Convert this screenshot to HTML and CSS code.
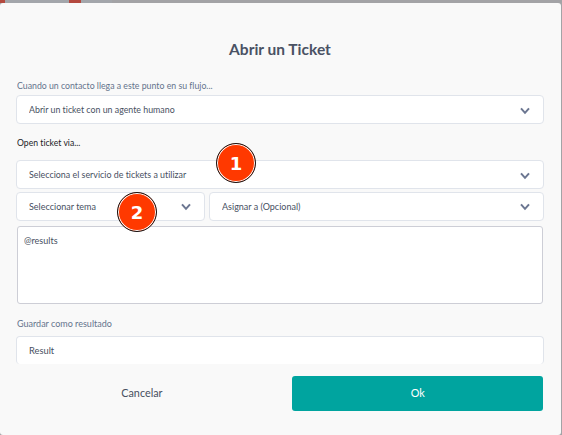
FILE: index.html
```html
<!DOCTYPE html>
<html lang="es">
<head>
<meta charset="utf-8">
<title>Abrir un Ticket</title>
<link rel="stylesheet" href="styles.css">
</head>
<body>
<div class="canvas-strip"></div>
<main class="modal">
  <h1 class="title">Abrir un Ticket</h1>
  <div class="label intro"><span>Cuando un contacto llega a este punto en su flujo...</span></div>
  <div class="select"><span class="t-action">Abrir un ticket con un agente humano</span><svg class="chevron" viewBox="0 0 10 8"><path d="M1 1.4 5 5.8 9 1.4"/></svg></div>
  <div class="label via"><span>Open ticket via...</span></div>
  <div class="select"><span class="t-service">Selecciona el servicio de tickets a utilizar</span><svg class="chevron" viewBox="0 0 10 8"><path d="M1 1.4 5 5.8 9 1.4"/></svg><b class="marker one">1</b></div>
  <div class="row">
    <div class="select topic"><span class="t-topic">Seleccionar tema</span><svg class="chevron" viewBox="0 0 10 8"><path d="M1 1.4 5 5.8 9 1.4"/></svg><b class="marker two">2</b></div>
    <div class="select assignee"><span class="t-assign">Asignar a (Opcional)</span><svg class="chevron" viewBox="0 0 10 8"><path d="M1 1.4 5 5.8 9 1.4"/></svg></div>
  </div>
  <div class="body-text"><span>@results</span></div>
  <div class="label save"><span>Guardar como resultado</span></div>
  <div class="select result"><span class="t-result">Result</span></div>
  <div class="actions">
    <div class="button cancel"><span>Cancelar</span></div>
    <div class="button ok"><span>Ok</span></div>
  </div>
</main>
</body>
</html>
```
FILE: styles.css
```css
* { box-sizing: border-box; }
body {
  margin: 0;
  height: 435px;
  overflow: hidden;
  background: #a3a3a6;
  font-family: Lato, "Liberation Sans", sans-serif;
  font-size: 10px;
  font-variant-ligatures: none;
  color: #47505f;
}
.canvas-strip {
  height: 3px;
  background: linear-gradient(90deg, #b4493f 0 5px, #a3a6ab 5px 69px, #b4493f 69px 81px, #a3a6ab 81px 112px, #a3a3a6 112px);
}
.modal {
  width: 561px;
  height: 432px;
  padding: 36px 17px 0 16px;
  border-radius: 3px;
  background: #f9f9f9;
}
span {
  display: inline-block;
  white-space: nowrap;
  transform: scaleX(0.9);
  transform-origin: left center;
}
.title {
  margin: 0;
  height: 22px;
  line-height: 21px;
  font-size: 15.5px;
  text-align: center;
  color: #4a5264;
}
.label { padding-left: 1px; line-height: 13px; color: #64738c; }
.intro { margin-top: 18px; height: 16px; }
.intro span { transform: scaleX(0.875); }
.via { margin: 12px 0 0; height: 24px; color: #1b1b1f; }
.via span { transform: scaleX(0.865); }
.select {
  position: relative;
  display: flex;
  align-items: center;
  justify-content: space-between;
  height: 29px;
  padding: 0 13px 0 12px;
  border: 1px solid #e0e4eb;
  border-radius: 4px;
  background: #fff;
}
.select span { margin-top: -2px; }
.t-action { transform: scaleX(0.882); }
.t-service { transform: scaleX(0.888); }
.t-result { transform: scaleX(0.93); }
.chevron {
  width: 10px;
  height: 8px;
  margin-top: 2px;
  fill: none;
  stroke: #6b7691;
  stroke-width: 2;
}
.row { display: flex; gap: 4px; margin-top: 3px; }
.row .chevron { margin-top: 0; }
.topic { width: 189px; }
.assignee { flex: 1; }
.marker {
  position: absolute;
  z-index: 1;
  display: flex;
  align-items: center;
  justify-content: center;
  width: 40px;
  height: 40px;
  border: 1.5px solid #171313;
  border-radius: 50%;
  box-shadow: inset 0 0 0 1px #fff;
  background: #ff3900;
  color: #fff;
  font: bold 18px "DejaVu Sans", sans-serif;
}
.one { left: 199px; top: -18px; }
.two { left: 100px; top: -1px; }
.body-text {
  height: 78px;
  margin: 5px 1px 0 1px;
  padding: 6px;
  border: 1px solid #cdced6;
  border-radius: 3px;
  background: #fff;
  line-height: 14px;
}
.save { margin-top: 13px; height: 19px; }
.result { height: 28px; border-bottom: 0; }
.actions { display: flex; margin-top: 12px; }
.button {
  display: flex;
  align-items: center;
  justify-content: center;
  height: 35px;
  padding-bottom: 2px;
  font-size: 12px;
}
.button span { transform-origin: center; }
.cancel { width: 252px; margin-right: 24px; }
.ok { width: 251px; border-radius: 3px; background: #00a49f; color: #fff; }
```
